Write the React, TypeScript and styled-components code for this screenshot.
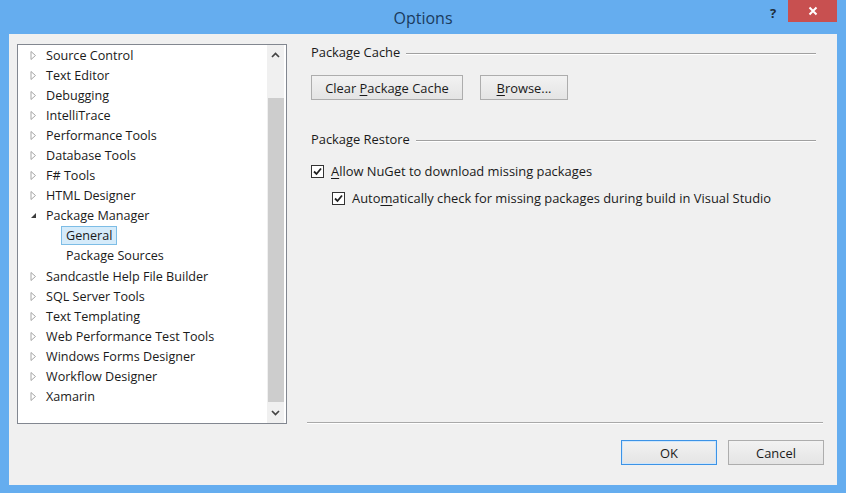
import React from "react";
import styled, { createGlobalStyle } from "styled-components";

const Global = createGlobalStyle`
  html, body { margin: 0; padding: 0; }
  body { width: 846px; height: 493px; overflow: hidden; font-family: "Open Sans", "Noto Sans", sans-serif; }
  * { box-sizing: border-box; }
`;

const FONT = `"Open Sans", "Noto Sans", sans-serif`;
const FS = "12.9px";
const TREE_FS = "12.6px";

const Frame = styled.div`
  width: 846px;
  height: 493px;
  background: #65adef;
  display: flex;
  flex-direction: column;
  padding: 0 9px 8px 9px;
`;

const TitleBar = styled.div`
  height: 34px;
  flex: none;
  display: grid;
  grid-template-columns: 1fr auto 1fr;
  align-items: start;
`;

const Title = styled.div`
  grid-column: 2;
  font-family: ${FONT};
  font-size: 16px;
  color: #1b3b5e;
  line-height: 36px;
`;

const Controls = styled.div`
  grid-column: 3;
  justify-self: end;
  display: flex;
  align-items: flex-start;
`;

const HelpButton = styled.div`
  width: 30px;
  height: 22px;
  display: flex;
  align-items: center;
  justify-content: center;
  font-family: ${FONT};
  font-weight: 700;
  font-size: 13px;
  color: #1e2d3c;
  padding-top: 3px;
`;

const CloseButton = styled.div`
  width: 49px;
  height: 22px;
  background: #c85050;
  display: flex;
  align-items: center;
  justify-content: center;
`;

const Client = styled.div`
  flex: 1;
  background: #f0f0f0;
  display: grid;
  grid-template-columns: 270px 1fr;
  grid-template-rows: 380px auto;
  column-gap: 20px;
  padding: 10px 14px 0 8px;
`;

const Tree = styled.div`
  grid-row: 1;
  grid-column: 1;
  border: 1px solid #828790;
  background: #fff;
  display: flex;
`;

const TreeList = styled.div`
  flex: 1;
  display: flex;
  flex-direction: column;
`;

const Row = styled.div<{ $indent: number }>`
  height: 20.1px;
  display: flex;
  align-items: center;
  padding-left: ${(p) => p.$indent}px;
  font-family: ${FONT};
  font-size: ${TREE_FS};
  color: #1a1a1a;
  white-space: nowrap;
`;

const ArrowSlot = styled.span`
  width: 11px;
  flex: none;
  display: flex;
  align-items: center;
`;

const Label = styled.span<{ $selected?: boolean }>`
  border: 1px solid ${(p) => (p.$selected ? "#7dbde6" : "transparent")};
  background: ${(p) => (p.$selected ? "#d5ebfa" : "transparent")};
  padding: 0 4px;
  line-height: 17px;
`;

const Scrollbar = styled.div`
  width: 17px;
  flex: none;
  margin-right: 2px;
  background: #f0f0f0;
  display: flex;
  flex-direction: column;
  align-items: center;
`;

const ScrollArrow = styled.div`
  height: 20px;
  width: 100%;
  display: flex;
  align-items: center;
  justify-content: center;
  flex: none;
`;

const ScrollTrack = styled.div`
  flex: 1;
  width: 100%;
  padding: 33px 0 0 1px;
  display: flex;
`;

const Thumb = styled.div`
  flex: 1;
  background: #cdcdcd;
  margin-bottom: 1px;
`;

const Page = styled.div`
  grid-row: 1;
  grid-column: 2;
  border-bottom: 1px solid #a9a9a9;
  box-shadow: 0 1px 0 #ffffff;
  margin-bottom: 1px;
  display: flex;
  flex-direction: column;
  padding: 0 7px 0 4px;
`;

const SectionHeader = styled.div<{ $top: number }>`
  display: flex;
  align-items: center;
  gap: 6px;
  margin-top: ${(p) => p.$top}px;
  height: 16px;
  font-family: ${FONT};
  font-size: ${FS};
  color: #1a1a1a;
  white-space: nowrap;
  &::after {
    content: "";
    flex: 1;
    height: 1px;
    margin-top: 2px;
    background: #a0a0a0;
    box-shadow: 0 1px 0 #fff;
  }
`;

const ButtonRow = styled.div`
  display: flex;
  gap: 17px;
  margin-top: 15px;
`;

const Button = styled.button<{ $w: number; $default?: boolean }>`
  width: ${(p) => p.$w}px;
  height: 25px;
  border: 1px solid ${(p) => (p.$default ? "#3c93e6" : "#adadad")};
  background: linear-gradient(#f2f2f2, #e4e4e4);
  box-shadow: ${(p) => (p.$default ? "inset 0 0 0 1px #cfe6fb" : "none")};
  font-family: ${FONT};
  font-size: ${FS};
  color: #1a1a1a;
  padding: 0;
  display: flex;
  align-items: center;
  justify-content: center;
`;

const CheckRow = styled.div<{ $indent: number; $top: number }>`
  display: flex;
  align-items: center;
  gap: 7px;
  margin-top: ${(p) => p.$top}px;
  padding-left: ${(p) => p.$indent}px;
  font-family: ${FONT};
  font-size: ${FS};
  color: #1a1a1a;
  white-space: nowrap;
  height: 16px;
`;

const Box = styled.span`
  width: 13px;
  height: 13px;
  border: 1px solid #333;
  background: #fff;
  display: flex;
  align-items: center;
  justify-content: center;
  flex: none;
`;

const Footer = styled.div`
  grid-row: 2;
  grid-column: 2;
  display: flex;
  justify-content: flex-end;
  gap: 11px;
  padding-top: 16px;
  margin-right: -1px;
`;

const U = styled.span`
  text-decoration: underline;
  text-underline-offset: 2px;
`;

const Collapsed = () => (
  <svg width="7" height="9" viewBox="0 0 7 9">
    <path d="M1 0.5 L5.5 4.5 L1 8.5 Z" fill="#fff" stroke="#a6a6a6" strokeWidth="1" />
  </svg>
);

const Expanded = () => (
  <svg width="7" height="7" viewBox="0 0 7 7">
    <path d="M6 1 L6 6 L1 6 Z" fill="#3c3c3c" />
  </svg>
);

const Check = () => (
  <svg width="9" height="9" viewBox="0 0 9 9">
    <path d="M1 4.5 L3.5 7 L8 1.5" fill="none" stroke="#222" strokeWidth="1.8" />
  </svg>
);

const Chevron = ({ up }: { up?: boolean }) => (
  <svg width="9" height="6" viewBox="0 0 9 6">
    <path d={up ? "M1 5 L4.5 1.5 L8 5" : "M1 1 L4.5 4.5 L8 1"} fill="none" stroke="#444" strokeWidth="1.7" />
  </svg>
);

type Item = { label: string; state: "collapsed" | "expanded" | "child"; selected?: boolean };

const items: Item[] = [
  { label: "Source Control", state: "collapsed" },
  { label: "Text Editor", state: "collapsed" },
  { label: "Debugging", state: "collapsed" },
  { label: "IntelliTrace", state: "collapsed" },
  { label: "Performance Tools", state: "collapsed" },
  { label: "Database Tools", state: "collapsed" },
  { label: "F# Tools", state: "collapsed" },
  { label: "HTML Designer", state: "collapsed" },
  { label: "Package Manager", state: "expanded" },
  { label: "General", state: "child", selected: true },
  { label: "Package Sources", state: "child" },
  { label: "Sandcastle Help File Builder", state: "collapsed" },
  { label: "SQL Server Tools", state: "collapsed" },
  { label: "Text Templating", state: "collapsed" },
  { label: "Web Performance Test Tools", state: "collapsed" },
  { label: "Windows Forms Designer", state: "collapsed" },
  { label: "Workflow Designer", state: "collapsed" },
  { label: "Xamarin", state: "collapsed" },
];

export default function App() {
  return (
    <>
      <Global />
      <Frame>
        <TitleBar>
          <Title>Options</Title>
          <Controls>
            <HelpButton>?</HelpButton>
            <CloseButton>
              <svg width="10" height="10" viewBox="0 0 10 10">
                <path d="M1.5 1.5 L8.5 8.5 M8.5 1.5 L1.5 8.5" stroke="#fff" strokeWidth="2" />
              </svg>
            </CloseButton>
          </Controls>
        </TitleBar>
        <Client>
          <Tree>
            <TreeList>
              {items.map((it) =>
                it.state === "child" ? (
                  <Row key={it.label} $indent={43}>
                    <Label $selected={it.selected}>{it.label}</Label>
                  </Row>
                ) : (
                  <Row key={it.label} $indent={12}>
                    <ArrowSlot>{it.state === "expanded" ? <Expanded /> : <Collapsed />}</ArrowSlot>
                    <Label>{it.label}</Label>
                  </Row>
                )
              )}
            </TreeList>
            <Scrollbar>
              <ScrollArrow>
                <Chevron up />
              </ScrollArrow>
              <ScrollTrack>
                <Thumb />
              </ScrollTrack>
              <ScrollArrow>
                <Chevron />
              </ScrollArrow>
            </Scrollbar>
          </Tree>
          <Page>
            <SectionHeader $top={0}>Package Cache</SectionHeader>
            <ButtonRow>
              <Button $w={152}>
                Clear&nbsp;<U>P</U>ackage Cache
              </Button>
              <Button $w={88}>
                <U>B</U>rowse...
              </Button>
            </ButtonRow>
            <SectionHeader $top={31}>Package Restore</SectionHeader>
            <CheckRow $indent={0} $top={16}>
              <Box>
                <Check />
              </Box>
              <span>
                <U>A</U>llow NuGet to download missing packages
              </span>
            </CheckRow>
            <CheckRow $indent={21} $top={11}>
              <Box>
                <Check />
              </Box>
              <span>
                Auto<U>m</U>atically check for missing packages during build in Visual Studio
              </span>
            </CheckRow>
          </Page>
          <Footer>
            <Button $w={96} $default>
              OK
            </Button>
            <Button $w={96}>Cancel</Button>
          </Footer>
        </Client>
      </Frame>
    </>
  );
}
